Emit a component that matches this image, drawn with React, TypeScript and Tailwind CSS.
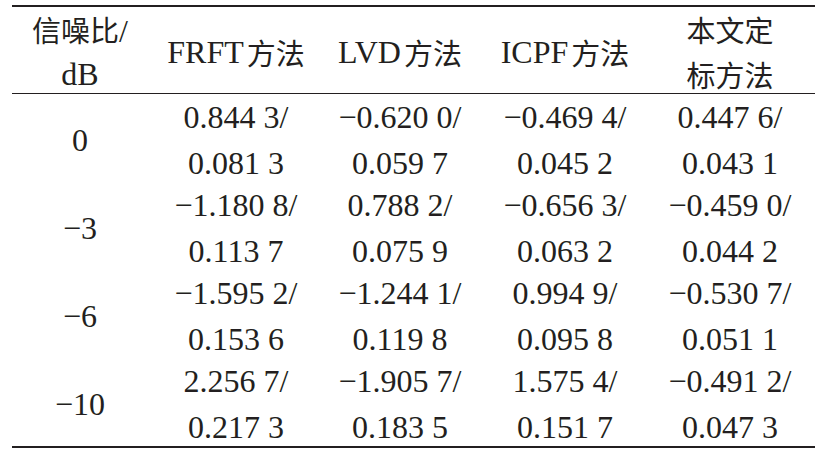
const rows = [
  {
    snr: '0',
    values: [
      ['0.844 3/', '0.081 3'],
      ['−0.620 0/', '0.059 7'],
      ['−0.469 4/', '0.045 2'],
      ['0.447 6/', '0.043 1'],
    ],
  },
  {
    snr: '−3',
    values: [
      ['−1.180 8/', '0.113 7'],
      ['0.788 2/', '0.075 9'],
      ['−0.656 3/', '0.063 2'],
      ['−0.459 0/', '0.044 2'],
    ],
  },
  {
    snr: '−6',
    values: [
      ['−1.595 2/', '0.153 6'],
      ['−1.244 1/', '0.119 8'],
      ['0.994 9/', '0.095 8'],
      ['−0.530 7/', '0.051 1'],
    ],
  },
  {
    snr: '−10',
    values: [
      ['2.256 7/', '0.217 3'],
      ['−1.905 7/', '0.183 5'],
      ['1.575 4/', '0.151 7'],
      ['−0.491 2/', '0.047 3'],
    ],
  },
]

// 中文部分字号略小一些
function Zh({ children }: { children: string }) {
  return <span className="text-[29px] font-[family-name:'Noto_Sans_CJK_SC',sans-serif]">{children}</span>
}

const cols = 'grid grid-cols-[136px_176px_152px_178px_152px_9px]'

export default function App() {
  return (
    <div className="w-[822px] h-[458px] bg-white pt-[5px] pl-[12px] text-[#231f20] font-[family-name:'Liberation_Serif','Noto_Sans_CJK_SC',serif] text-[32px]">
      <div className="w-[803px] border-t-2 border-b-2 border-[#231f20]">
        {/* 表头 */}
        <div className={`${cols} h-[87px] border-b-[1.5px] border-[#231f20]`}>
          <div className="flex flex-col items-center justify-center leading-[45px]">
            <div className="h-[45px] whitespace-nowrap">
              <Zh>信噪比</Zh>/
            </div>
            <div className="h-[45px]">dB</div>
          </div>
          <div className="flex items-center justify-center leading-[45px] whitespace-nowrap">
            FRFT<span className="w-[3px]" />
            <Zh>方法</Zh>
          </div>
          <div className="flex items-center justify-center leading-[45px] whitespace-nowrap">
            LVD<span className="w-[3px]" />
            <Zh>方法</Zh>
          </div>
          <div className="flex items-center justify-center leading-[45px] whitespace-nowrap">
            ICPF<span className="w-[3px]" />
            <Zh>方法</Zh>
          </div>
          <div className="flex flex-col items-center justify-center leading-[45px]">
            <div className="h-[45px]">
              <Zh>本文定</Zh>
            </div>
            <div className="h-[45px]">
              <Zh>标方法</Zh>
            </div>
          </div>
          <div />
        </div>

        {/* 数据 */}
        {rows.map((row) => (
          <div key={row.snr} className={`${cols} h-[88px]`}>
            <div className="flex items-center justify-center leading-[46px]">{row.snr}</div>
            {row.values.map(([top, bottom], i) => (
              <div key={i} className="flex flex-col items-center justify-center leading-[46px] whitespace-nowrap">
                <div>{top}</div>
                <div>{bottom}</div>
              </div>
            ))}
            <div />
          </div>
        ))}
      </div>
    </div>
  )
}
